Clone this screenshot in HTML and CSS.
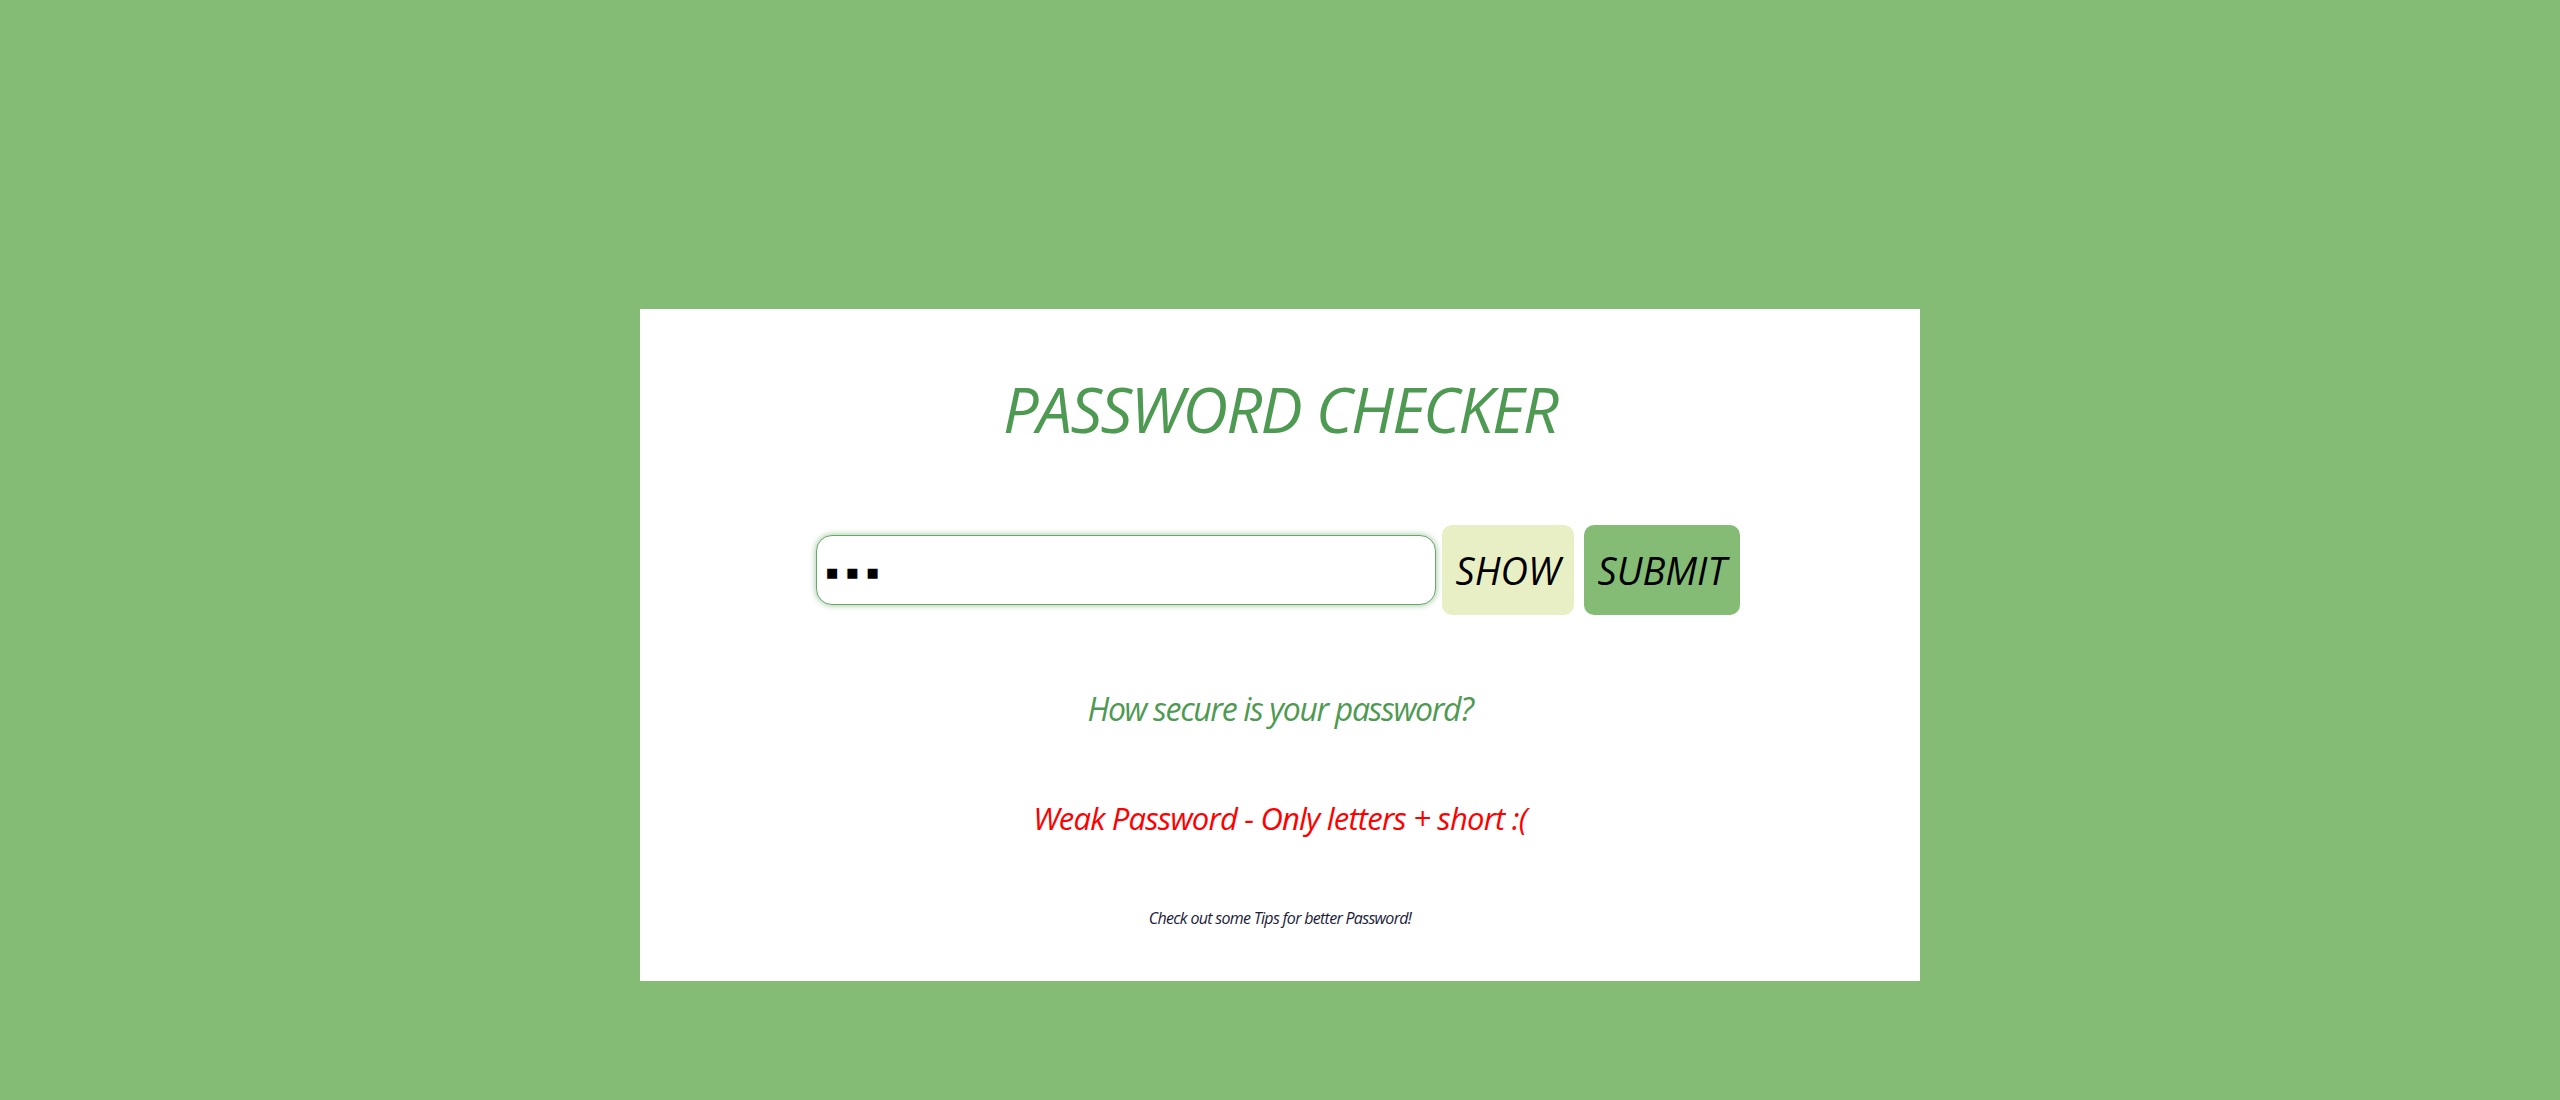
FILE: index.html
```html
<!DOCTYPE html>
<html lang="en">
<head>
<meta charset="utf-8">
<title>Password Checker</title>
<link rel="stylesheet" href="styles.css">
</head>
<body>
<main class="card">
  <h1 class="title">PASSWORD CHECKER</h1>
  <div class="row">
    <input class="pw" type="text" value="abc" autocomplete="off">
    <button class="btn btn-show">SHOW</button>
    <button class="btn btn-submit">SUBMIT</button>
  </div>
  <p class="question">How secure is your password?</p>
  <p class="result">Weak Password - Only letters + short :(</p>
  <p class="tips">Check out some Tips for better Password!</p>
</main>
</body>
</html>
```
FILE: styles.css
```css
html, body {
  margin: 0;
  padding: 0;
}
body {
  background: #84bc75;
  height: 1100px;
  font-family: "Open Sans", "DejaVu Sans", sans-serif;
  font-style: italic;
  font-stretch: 100%;
}
.card {
  width: 1280px;
  height: 672px;
  margin: 309px auto 0;
  background: #ffffff;
  box-sizing: border-box;
  padding-top: 55px;
  text-align: center;
  display: flex;
  flex-direction: column;
  align-items: center;
}
.title {
  margin: 0;
  font-size: 63px;
  line-height: 90px;
  font-weight: 400;
  letter-spacing: -1.7px;
  color: #4f9a52;
}
.row {
  margin-top: 71px;
  margin-right: 4px;
  display: flex;
  align-items: center;
}
.pw {
  width: 620px;
  height: 70px;
  box-sizing: border-box;
  border: 1px solid #6aa86a;
  border-radius: 16px;
  box-shadow: 0 0 6px rgba(80, 150, 80, 0.6);
  padding: 4px 9px 0;
  font-family: "DejaVu Sans", sans-serif;
  font-style: normal;
  font-size: 13px;
  letter-spacing: 8px;
  -webkit-text-security: square;
  outline: none;
  background: #fff;
}
.btn {
  height: 90px;
  border: none;
  border-radius: 10px;
  font-family: "Open Sans", "DejaVu Sans", sans-serif;
  font-style: italic;
  font-size: 38px;
  color: #000;
  padding: 0;
}
.btn-show {
  margin-left: 6px;
  width: 132px;
  background: #e9efc4;
}
.btn-submit {
  margin-left: 10px;
  width: 156px;
  background: #84bc75;
}
.question {
  margin: 72px 0 0;
  font-size: 32px;
  line-height: 44px;
  letter-spacing: -1.35px;
  color: #4f9a52;
}
.result {
  margin: 65px 0 0;
  font-size: 31px;
  line-height: 44px;
  letter-spacing: -0.8px;
  color: #ff0000;
}
.tips {
  margin: 67px 0 0;
  font-size: 16px;
  line-height: 22px;
  letter-spacing: -0.7px;
  color: #1b1b3a;
}
```
